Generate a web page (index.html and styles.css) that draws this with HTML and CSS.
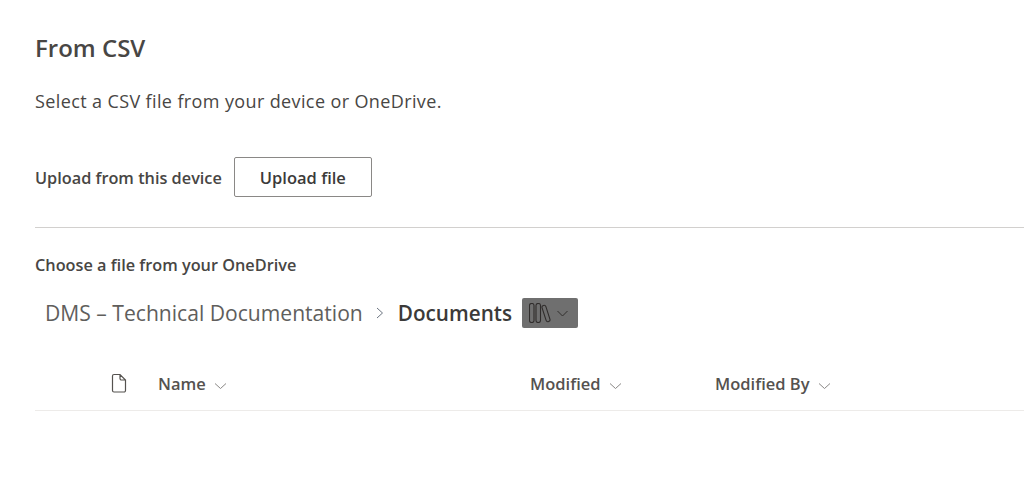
FILE: index.html
```html
<!DOCTYPE html>
<html lang="en">
<head>
<meta charset="utf-8">
<title>From CSV</title>
<link rel="stylesheet" href="styles.css">
</head>
<body>
<main class="page">
  <h1 class="title">From CSV</h1>
  <p class="subtitle">Select a CSV file from your device or OneDrive.</p>
  <div class="upload-row">
    <span class="label">Upload from this device</span>
    <button class="upload-btn" type="button">Upload file</button>
  </div>
  <hr class="divider">
  <div class="label choose">Choose a file from your OneDrive</div>
  <nav class="crumbs">
    <span class="crumb">DMS – Technical Documentation</span>
    <svg class="crumb-sep" width="10" height="14" viewBox="0 0 10 14"><path d="M2 2l5.500 5L2 12" fill="none" stroke="#6b7480" stroke-width="1"/></svg>
    <span class="crumb-current">Documents</span>
    <span class="lib-btn">
      <svg width="22" height="20" viewBox="0 0 22 20"><g fill="none" stroke="#2f2c2b" stroke-width="1.100"><rect x="0.500" y="0.500" width="4.500" height="19" rx="2"/><rect x="7" y="0.500" width="4.500" height="19" rx="2"/><rect x="15" y="2" width="4" height="17" rx="2" transform="rotate(-18 17 10.500)"/></g></svg>
      <svg width="11" height="7" viewBox="0 0 11 7"><path d="M0.500 1l5 5 5-5" fill="none" stroke="#33302e" stroke-width="1"/></svg>
    </span>
  </nav>
  <div class="list-head">
    <span class="col col-icon">
      <svg width="18" height="21" viewBox="0 0 18 21"><path d="M2.500 3a1.500 1.500 0 0 1 1.500-1.500h6l5.500 5.500v10.500a1.500 1.500 0 0 1-1.500 1.500h-10a1.500 1.500 0 0 1-1.500-1.500zM10 1.500v4a1.500 1.500 0 0 0 1.500 1.500h4" fill="none" stroke="#55524f" stroke-width="1.200"/></svg>
    </span>
    <span class="col col-name">Name<svg class="chev" width="13" height="8" viewBox="0 0 13 8"><path d="M1 1.500l5.500 5 5.500-5" fill="none" stroke="#8a8886" stroke-width="1"/></svg></span>
    <span class="col col-mod">Modified<svg class="chev" width="13" height="8" viewBox="0 0 13 8"><path d="M1 1.500l5.500 5 5.500-5" fill="none" stroke="#8a8886" stroke-width="1"/></svg></span>
    <span class="col col-by">Modified By<svg class="chev" width="13" height="8" viewBox="0 0 13 8"><path d="M1 1.500l5.500 5 5.500-5" fill="none" stroke="#8a8886" stroke-width="1"/></svg></span>
  </div>
</main>
</body>
</html>
```

FILE: styles.css
```css
html, body {
  margin: 0;
  padding: 0;
  background: #fff;
  overflow: hidden;
}
.page {
  padding: 34px 0 0 35px;
  height: 469px;
  font-family: "Open Sans", "Noto Sans", sans-serif;
  color: #323130;
}
.title {
  margin: 0;
  font-size: 24px;
  line-height: 28px;
  font-weight: 600;
  color: #484644;
}
.subtitle {
  margin: 27px 0 0;
  font-size: 18px;
  line-height: 24px;
  color: #484644;
  letter-spacing: 0.38px;
}
.upload-row {
  display: flex;
  align-items: center;
  gap: 12px;
  margin-top: 44px;
}
.upload-row .label {
  padding-top: 1px;
}
.label {
  font-size: 16.300px;
  font-weight: 600;
  color: #484644;
}
.upload-btn {
  width: 138px;
  height: 40px;
  box-sizing: border-box;
  background: #fff;
  border: 1px solid #8a8886;
  border-radius: 2px;
  font: 600 16.500px "Open Sans", "Noto Sans", sans-serif;
  color: #3b3a39;
}
.divider {
  margin: 30px 0 0;
  border: 0;
  border-top: 1px solid #d2d0ce;
}
.choose {
  margin-top: 27px;
  line-height: 20px;
}
.crumbs {
  display: flex;
  align-items: center;
  margin: 23px 0 0 10px;
  height: 30px;
}
.crumb {
  font-size: 21.100px;
  color: #605e5c;
  margin-bottom: 1px;
}
.crumb-sep {
  margin: 0 12.500px;
}
.crumb-current {
  font-size: 20.700px;
  font-weight: 600;
  color: #3b3a39;
}
.lib-btn {
  display: flex;
  align-items: center;
  gap: 6px;
  margin-left: 10px;
  width: 56px;
  height: 30px;
  padding-left: 7px;
  box-sizing: border-box;
  background: #6f6f6f;
  border-radius: 2px;
}
.list-head {
  display: grid;
  grid-template-columns: 123px 372px 185px 1fr;
  align-items: center;
  height: 54px;
  margin-top: 29px;
  border-bottom: 1px solid #edebe9;
  box-sizing: border-box;
  font-size: 16.500px;
  font-weight: 600;
  color: #55524f;
}
.col-icon {
  padding-left: 75px;
  display: flex;
}
.chev {
  margin-left: 8px;
}
```
